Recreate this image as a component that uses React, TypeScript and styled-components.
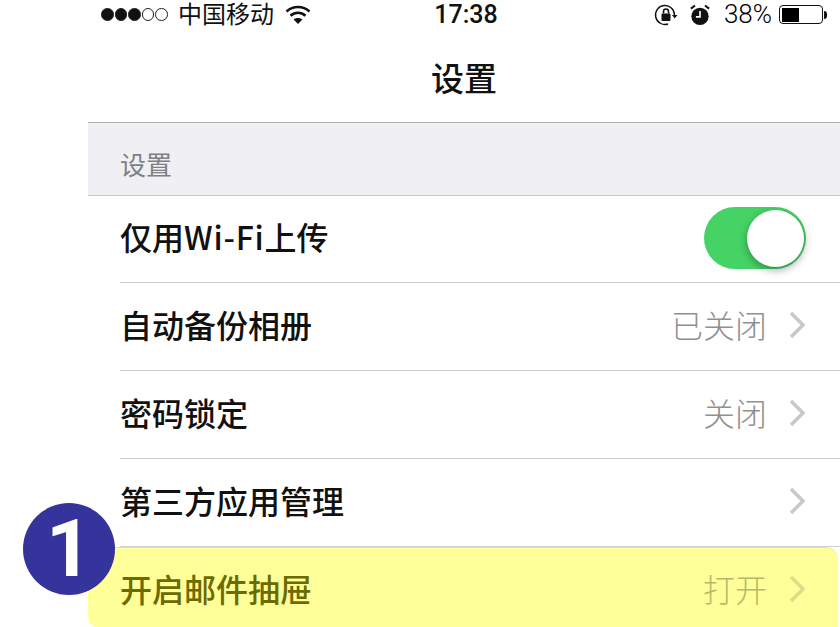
import React from 'react';
import styled, { createGlobalStyle } from 'styled-components';

const GlobalStyle = createGlobalStyle`
  html, body {
    margin: 0;
    padding: 0;
    background: #fff;
    overflow: hidden;
  }
`;

const CJK = `"Noto Sans CJK SC", "Liberation Sans", sans-serif`;

const Page = styled.div`
  position: relative;
  width: 840px;
  height: 627px;
  overflow: hidden;
  box-sizing: border-box;
  padding: 0 2px 0 88px;
  font-family: ${CJK};
  color: #000;
`;

const StatusBar = styled.div`
  height: 29px;
  display: grid;
  grid-template-columns: 1fr auto 1fr;
  align-items: center;
  padding: 0 11px 0 13px;
`;

const StatusSide = styled.div<{ $end?: boolean }>`
  display: flex;
  align-items: center;
  justify-content: ${(p) => (p.$end ? 'flex-end' : 'flex-start')};
`;

const Signal = styled.div`
  display: flex;
  gap: 1px;
  margin-right: 10px;
`;

const Dot = styled.span<{ $on: boolean }>`
  box-sizing: border-box;
  width: 12.6px;
  height: 12.6px;
  border-radius: 50%;
  border: 1px solid #222;
  background: ${(p) => (p.$on ? '#111' : 'transparent')};
`;

const Carrier = styled.span`
  font-family: "Liberation Sans", "Noto Sans CJK SC", sans-serif;
  font-size: 24px;
  font-weight: 400;
  line-height: 29px;
  margin-right: 11px;
  color: #111;
`;

const Clock = styled.span`
  font-family: Roboto, sans-serif;
  font-size: 25px;
  font-weight: 500;
  line-height: 29px;
  margin-left: 4px;
  color: #111;
`;

const Percent = styled.span`
  font-family: Roboto, sans-serif;
  font-size: 26px;
  font-weight: 300;
  line-height: 29px;
  margin: 0 7px 0 14px;
  color: #000;
`;

const Battery = styled.div`
  box-sizing: border-box;
  width: 44px;
  height: 19px;
  border: 1.5px solid #111;
  border-radius: 4px;
  padding: 1.5px;
`;

const BatteryLevel = styled.div`
  width: 17px;
  height: 100%;
  background: #000;
`;

const BatteryTip = styled.div`
  width: 3px;
  height: 8px;
  margin-left: 1px;
  background: #111;
  border-radius: 0 3px 3px 0;
`;

const NavBar = styled.div`
  height: 94px;
  box-sizing: border-box;
  display: flex;
  justify-content: center;
  padding-top: 24px;
  border-bottom: 1px solid #b4b4b6;
  margin-right: -2px;
`;

const NavTitle = styled.h1`
  margin: 0;
  font-size: 33px;
  font-weight: 500;
  line-height: 48px;
  color: #111;
`;

const SectionHeader = styled.div`
  height: 73px;
  box-sizing: border-box;
  padding: 22px 0 0 32px;
  background: #efeff4;
  border-bottom: 1px solid #c8c8ca;
  margin-right: -2px;
  font-size: 26px;
  line-height: 38px;
  color: #808084;
`;

const Row = styled.div`
  height: 88px;
  box-sizing: border-box;
  margin: 0 -2px 0 32px;
  padding: 0 35px 6px 0;
  display: flex;
  align-items: center;
  border-bottom: 1px solid #d0d0d0;

  ${SectionHeader} + & {
    height: 87px;
  }
`;

const HighlightRow = styled.div`
  height: 81px;
  box-sizing: border-box;
  padding: 0 33px 0 32px;
  display: flex;
  align-items: center;
  background: #ffff99;
  border-top: 1px solid #e6e68c;
  border-radius: 0 12px 0 12px;
`;

const Label = styled.span<{ $dim?: boolean }>`
  flex: 1;
  font-size: 32px;
  font-weight: 500;
  line-height: 44px;
  color: ${(p) => (p.$dim ? '#6b6b00' : '#111')};
`;

const Latin = styled.span`
  letter-spacing: 0.8px;
`;

const Value = styled.span<{ $dim?: boolean }>`
  font-size: 32px;
  font-weight: 300;
  line-height: 44px;
  margin-right: 22px;
  color: ${(p) => (p.$dim ? '#b8b86a' : '#909090')};
`;

const Toggle = styled.div`
  position: relative;
  width: 102px;
  height: 62px;
  margin: 4px -1px 0 0;
  border-radius: 31px;
  background: #46d366;
`;

const Knob = styled.div`
  position: absolute;
  top: 3px;
  right: 2px;
  width: 57px;
  height: 57px;
  border-radius: 50%;
  background: #fff;
  box-shadow: 0 3px 8px rgba(0, 0, 0, 0.35);
`;

const Badge = styled.div`
  position: absolute;
  left: 23px;
  top: 503px;
  width: 92px;
  height: 92px;
  border-radius: 50%;
  background: #34349c;
  color: #fff;
  display: flex;
  align-items: center;
  justify-content: center;
  font-family: Roboto, sans-serif;
  font-size: 80px;
  font-weight: 700;
  line-height: 92px;
`;

const ChevronIcon = styled.svg`
  margin-top: 2px;
`;

const Chevron = ({ color }: { color: string }) => (
  <ChevronIcon width="16" height="28" viewBox="0 0 16 28" fill="none">
    <path d="M2 2 L14 14 L2 26" stroke={color} strokeWidth="3.4" />
  </ChevronIcon>
);

const Wifi = () => (
  <svg width="26" height="20" viewBox="0 0 26 20" fill="none" stroke="#111" strokeWidth="2.6">
    <path d="M1.5 6.5 C8 0.5 18 0.5 24.5 6.5" />
    <path d="M5.5 10.8 C10 6.8 16 6.8 20.5 10.8" />
    <path d="M13 19 L8.6 14.4 C11 12.4 15 12.4 17.4 14.4 Z" fill="#111" stroke="none" />
  </svg>
);

const RotationLock = () => (
  <svg width="24" height="24" viewBox="0 0 24 24" fill="none" stroke="#111" strokeWidth="1.4">
    <path d="M20.5 12 A9.5 9.5 0 1 0 14 21" />
    <path d="M18 12 L23.5 12 L20.7 15.5 Z" fill="#111" stroke="none" />
    <rect x="7.5" y="10.5" width="9" height="7.5" rx="1" fill="#111" stroke="none" />
    <path d="M9.5 10.5 V8.5 A2.5 2.5 0 0 1 14.5 8.5 V10.5" strokeWidth="1.6" />
  </svg>
);

const AlarmIcon = styled.svg`
  margin-left: 12px;
`;

const Alarm = () => (
  <AlarmIcon width="20" height="22" viewBox="0 0 22 24">
    <circle cx="11" cy="13.5" r="9.5" fill="#111" />
    <path d="M1 5 L5.5 1.5 M21 5 L16.5 1.5" stroke="#111" strokeWidth="2.2" />
    <path d="M11 7.5 V14 H6.5" stroke="#fff" strokeWidth="1.8" fill="none" />
  </AlarmIcon>
);

const items = [
  { label: '自动备份相册', value: '已关闭' },
  { label: '密码锁定', value: '关闭' },
  { label: '第三方应用管理', value: '' },
];

const App = () => {
  return (
    <Page>
      <GlobalStyle />
      <StatusBar>
        <StatusSide>
          <Signal>
            {[true, true, true, false, false].map((on, i) => (
              <Dot key={i} $on={on} />
            ))}
          </Signal>
          <Carrier>中国移动</Carrier>
          <Wifi />
        </StatusSide>
        <Clock>17:38</Clock>
        <StatusSide $end>
          <RotationLock />
          <Alarm />
          <Percent>38%</Percent>
          <Battery>
            <BatteryLevel />
          </Battery>
          <BatteryTip />
        </StatusSide>
      </StatusBar>
      <NavBar>
        <NavTitle>设置</NavTitle>
      </NavBar>
      <SectionHeader>设置</SectionHeader>
      <Row>
        <Label>
          仅用<Latin>Wi-Fi</Latin>上传
        </Label>
        <Toggle>
          <Knob />
        </Toggle>
      </Row>
      {items.map((item) => (
        <Row key={item.label}>
          <Label>{item.label}</Label>
          {item.value && <Value>{item.value}</Value>}
          <Chevron color="#c7c7cc" />
        </Row>
      ))}
      <HighlightRow>
        <Label $dim>开启邮件抽屉</Label>
        <Value $dim>打开</Value>
        <Chevron color="#dddd88" />
      </HighlightRow>
      <Badge>1</Badge>
    </Page>
  );
};

export default App;
